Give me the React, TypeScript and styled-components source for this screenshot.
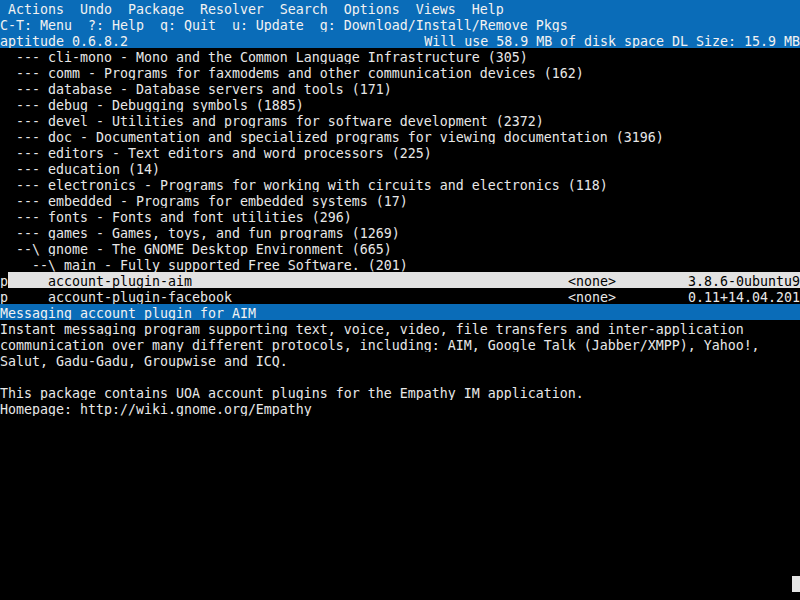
import * as React from 'react';
import styled, { createGlobalStyle, css } from 'styled-components';

const Global = createGlobalStyle`
  html, body {
    margin: 0;
    padding: 0;
    background: #000;
  }
`;

type Tone = 'plain' | 'bar';

const Screen = styled.div`
  width: 800px;
  height: 600px;
  overflow: hidden;
  background: #000;
  color: #e8e8e8;
  font-family: 'DejaVu Sans Mono', 'Liberation Mono', monospace;
  font-size: 13.29px;
  line-height: 19px;
  display: flex;
  flex-direction: column;
`;

const Row = styled.div<{ $tone?: Tone }>`
  height: 16px;
  flex: none;
  white-space: pre;
  display: flex;
  justify-content: space-between;
  overflow: hidden;
  ${(p) =>
    p.$tone === 'bar' &&
    css`
      background: #0a6cb8;
      color: #f2f2f2;
    `}
`;

const PackageRow = styled.div`
  height: 16px;
  flex: none;
  white-space: pre;
  display: grid;
  grid-template-columns: 8px 560px 120px 112px;
  overflow: hidden;
`;

const Flag = styled.span`
  color: #e8e8e8;
`;

const Cell = styled.span<{ $selected?: boolean }>`
  overflow: hidden;
  ${(p) =>
    p.$selected &&
    css`
      background: #e2e2e2;
      color: #000;
    `}
`;

const CursorRow = styled.div`
  height: 16px;
  flex: none;
  display: flex;
  justify-content: flex-end;
`;

const Cursor = styled.span`
  width: 8px;
  height: 16px;
  background: #e4e4e4;
`;

const sections = [
  '  --- cli-mono - Mono and the Common Language Infrastructure (305)',
  '  --- comm - Programs for faxmodems and other communication devices (162)',
  '  --- database - Database servers and tools (171)',
  '  --- debug - Debugging symbols (1885)',
  '  --- devel - Utilities and programs for software development (2372)',
  '  --- doc - Documentation and specialized programs for viewing documentation (3196)',
  '  --- editors - Text editors and word processors (225)',
  '  --- education (14)',
  '  --- electronics - Programs for working with circuits and electronics (118)',
  '  --- embedded - Programs for embedded systems (17)',
  '  --- fonts - Fonts and font utilities (296)',
  '  --- games - Games, toys, and fun programs (1269)',
  '  --\\ gnome - The GNOME Desktop Environment (665)',
  '    --\\ main - Fully supported Free Software. (201)',
];

const packages = [
  { name: 'account-plugin-aim', version: '3.8.6-0ubuntu9', selected: true },
  { name: 'account-plugin-facebook', version: '0.11+14.04.201', selected: false },
];

const description = [
  'Instant messaging program supporting text, voice, video, file transfers and inter-application',
  'communication over many different protocols, including: AIM, Google Talk (Jabber/XMPP), Yahoo!,',
  'Salut, Gadu-Gadu, Groupwise and ICQ.',
  '',
  'This package contains UOA account plugins for the Empathy IM application.',
  'Homepage: http://wiki.gnome.org/Empathy',
];

export default function App() {
  return (
    <Screen>
      <Global />
      <Row $tone="bar">
        {' Actions  Undo  Package  Resolver  Search  Options  Views  Help'}
      </Row>
      <Row $tone="bar">
        {'C-T: Menu  ?: Help  q: Quit  u: Update  g: Download/Install/Remove Pkgs'}
      </Row>
      <Row $tone="bar">
        <span>aptitude 0.6.8.2</span>
        <span>Will use 58.9 MB of disk space DL Size: 15.9 MB</span>
      </Row>
      {sections.map((s) => (
        <Row key={s}>{s}</Row>
      ))}
      {packages.map((p) => (
        <PackageRow key={p.name}>
          <Flag>p</Flag>
          <Cell $selected={p.selected}>{'     ' + p.name}</Cell>
          <Cell $selected={p.selected}>{'<none>'}</Cell>
          <Cell $selected={p.selected}>{p.version}</Cell>
        </PackageRow>
      ))}
      <Row $tone="bar">Messaging account plugin for AIM</Row>
      {description.map((d, i) => (
        <Row key={i}>{d}</Row>
      ))}
      {Array.from({ length: 10 }, (_, i) => (
        <Row key={'e' + i} />
      ))}
      <CursorRow>
        <Cursor />
      </CursorRow>
    </Screen>
  );
}
